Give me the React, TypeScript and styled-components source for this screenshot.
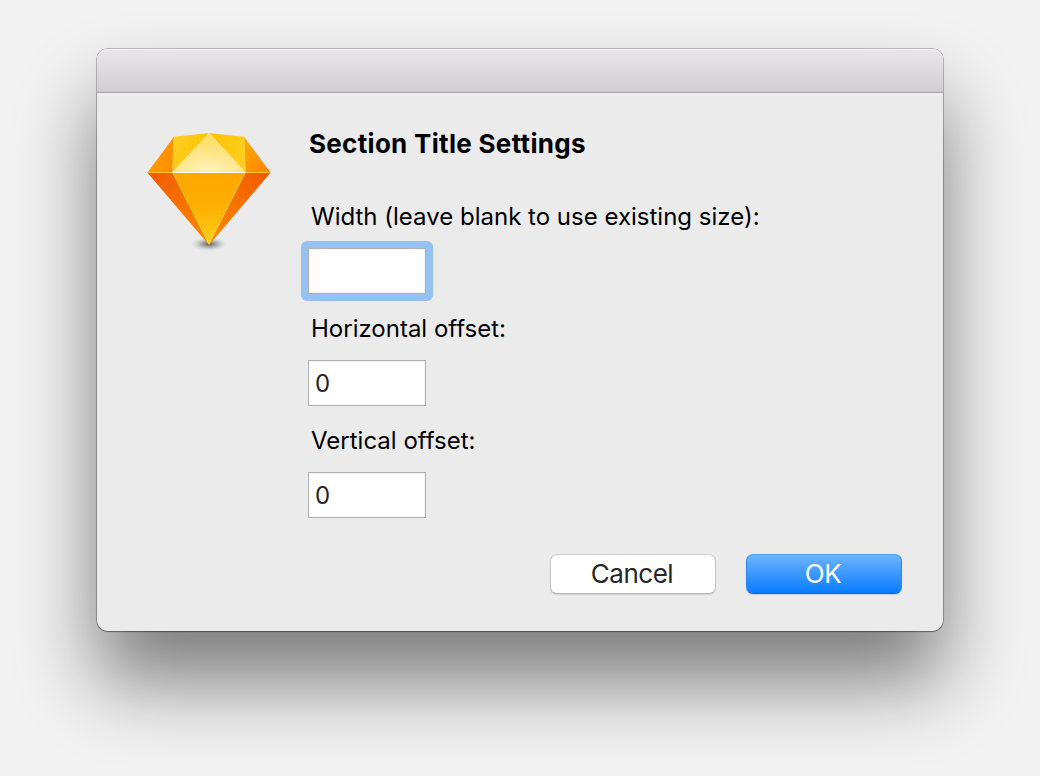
import React from "react";
import styled, { createGlobalStyle } from "styled-components";

const GlobalStyle = createGlobalStyle`
  *, *::before, *::after { box-sizing: border-box; }
  body {
    margin: 0;
    background: #f2f2f2;
    font-family: Inter, "Liberation Sans", sans-serif;
  }
`;

const Desktop = styled.main`
  height: 776px;
  padding: 49px 97px 0;
  overflow: hidden;
`;

const Dialog = styled.section`
  display: flex;
  flex-direction: column;
  height: 582px;
  border-radius: 11px;
  background: #ebebeb;
  box-shadow:
    0 0 0 1px rgba(0, 0, 0, 0.22),
    0 1px 1px rgba(0, 0, 0, 0.25),
    0 50px 80px rgba(0, 0, 0, 0.49);
`;

const TitleBar = styled.header`
  height: 44px;
  flex: none;
  border-radius: 11px 11px 0 0;
  border-bottom: 1px solid #aeacae;
  background: linear-gradient(#e8e6e9, #d0ced0);
  box-shadow: inset 0 1px 0 #f5f4f5, inset 0 -1px 0 #c4c2c4;
`;

const Content = styled.div`
  display: flex;
  padding: 35px 41px 0 50px;
`;

const AppIcon = styled.svg`
  flex: none;
  width: 124px;
  height: 124px;
  margin: 4px 37px 0 0;
`;

const Form = styled.form`
  flex: 1;
`;

const Heading = styled.h1`
  margin: 0 0 41px 1px;
  font-size: 26px;
  line-height: 32px;
  font-weight: 700;
  letter-spacing: 0.3px;
  color: #000;
`;

const Field = styled.div`
  height: 112px;
`;

const Label = styled.label`
  display: block;
  margin: 0 0 15px 3px;
  font-size: 24px;
  line-height: 32px;
  color: #000;
`;

const TextInput = styled.input`
  display: block;
  width: 118px;
  height: 46px;
  padding: 0 6px;
  border: 1px solid #b2b2b2;
  border-radius: 0;
  outline: none;
  background: #fff;
  box-shadow: inset 0 0 0 1px #f3f3f3;
  font: 24px/44px Inter, "Liberation Sans", sans-serif;
  color: #262626;
`;

const FocusRing = styled.div`
  width: 132px;
  margin: -7px;
  padding: 7px;
  border-radius: 6px;
  background: #95c1f3;
`;

const Actions = styled.footer`
  display: flex;
  justify-content: flex-end;
  gap: 30px;
  margin-top: 17px;
`;

const Button = styled.button<{ $primary?: boolean }>`
  width: ${({ $primary }) => ($primary ? "156px" : "166px")};
  height: 40px;
  padding: 0 2px 0 0;
  border: 1px solid;
  border-color: ${({ $primary }) =>
    $primary ? "#4ea0f5 #2f86f0 #0a62f0" : "#cfcfcf #c6c6c6 #b4b4b4"};
  border-radius: 7px;
  background: ${({ $primary }) =>
    $primary ? "linear-gradient(#6fb5fb, #067aff) border-box" : "#fff"};
  box-shadow: 0 1px 1px rgba(0, 0, 0, 0.12);
  font: 26px/38px Inter, "Liberation Sans", sans-serif;
  letter-spacing: -0.5px;
  color: ${({ $primary }) => ($primary ? "#fff" : "#262626")};
`;

function DiamondIcon() {
  return (
    <AppIcon viewBox="147 132 124 124" aria-hidden="true">
      <defs>
        <radialGradient id="ground">
          <stop offset="0" stopColor="#000" stopOpacity="0.6" />
          <stop offset="0.4" stopColor="#000" stopOpacity="0.28" />
          <stop offset="0.75" stopColor="#000" stopOpacity="0.07" />
          <stop offset="1" stopColor="#000" stopOpacity="0" />
        </radialGradient>
        <linearGradient id="front" x1="0" y1="0" x2="0" y2="1">
          <stop offset="0" stopColor="#ffa800" />
          <stop offset="0.45" stopColor="#fdae00" />
          <stop offset="1" stopColor="#ffd21a" />
        </linearGradient>
        <linearGradient id="lowerLeft" gradientUnits="userSpaceOnUse" x1="150" y1="172" x2="205" y2="240">
          <stop offset="0" stopColor="#f25a00" />
          <stop offset="0.5" stopColor="#f57200" />
          <stop offset="1" stopColor="#ff8500" />
        </linearGradient>
        <linearGradient id="lowerRight" gradientUnits="userSpaceOnUse" x1="265" y1="172" x2="213" y2="240">
          <stop offset="0" stopColor="#f25a00" />
          <stop offset="0.5" stopColor="#f57200" />
          <stop offset="1" stopColor="#ff8500" />
        </linearGradient>
        <linearGradient id="sideLeft" x1="0.2" y1="0.6" x2="1" y2="0.9">
          <stop offset="0" stopColor="#ff9b00" />
          <stop offset="1" stopColor="#fb8c00" />
        </linearGradient>
        <linearGradient id="sideRight" x1="0" y1="0.2" x2="0.8" y2="1">
          <stop offset="0" stopColor="#ffa600" />
          <stop offset="1" stopColor="#fc8700" />
        </linearGradient>
        <linearGradient id="crownLeft" x1="0" y1="0" x2="1" y2="0.3">
          <stop offset="0" stopColor="#fdce24" />
          <stop offset="1" stopColor="#ffc400" />
        </linearGradient>
        <linearGradient id="crownRight" x1="1" y1="0.4" x2="0" y2="0">
          <stop offset="0" stopColor="#fdce1c" />
          <stop offset="1" stopColor="#ffc200" />
        </linearGradient>
        <radialGradient id="table" cx="0.5" cy="1" r="0.95">
          <stop offset="0" stopColor="#fff1bd" />
          <stop offset="1" stopColor="#fedc5c" />
        </radialGradient>
      </defs>
      <ellipse cx="209" cy="244" rx="18" ry="7" fill="url(#ground)" />
      <path d="M147.3 172.5H173.5L209 245Z" fill="url(#lowerLeft)" />
      <path d="M270.7 172.5H244.5L209 245Z" fill="url(#lowerRight)" />
      <path d="M172.7 172.5H245.3L209 245Z" fill="url(#front)" />
      <path d="M147.3 172.7 174 136.7 172.7 172.7Z" fill="url(#sideLeft)" />
      <path d="M270.7 172.7 244 136.7 245.3 172.7Z" fill="url(#sideRight)" />
      <path d="M174 136.7 209 133 172.7 172.5Z" fill="url(#crownLeft)" />
      <path d="M244 136.7 209 133 245.3 172.5Z" fill="url(#crownRight)" />
      <path d="M209 133 245.3 172.5H172.7Z" fill="url(#table)" />
      <path
        d="M174 136.7 172.7 172.5 209 244 245.3 172.5 244 136.7M148.5 172.5H172.7M245.3 172.5H269.5"
        fill="none"
        stroke="#ffcf2e"
        strokeWidth="0.9"
      />
      <path d="M172.7 172 209 133.3 245.3 172" fill="none" stroke="#ffe888" strokeWidth="0.6" />
      <path d="M172.7 172.5H245.3" stroke="#fffdf0" strokeWidth="1.2" />
    </AppIcon>
  );
}

export default function App() {
  return (
    <>
      <GlobalStyle />
      <Desktop>
        <Dialog role="dialog" aria-labelledby="dialog-title">
          <TitleBar />
          <Content>
            <DiamondIcon />
            <Form onSubmit={(event) => event.preventDefault()}>
              <Heading id="dialog-title">Section Title Settings</Heading>
              <Field>
                <Label htmlFor="width">Width (leave blank to use existing size):</Label>
                <FocusRing>
                  <TextInput id="width" defaultValue="" />
                </FocusRing>
              </Field>
              <Field>
                <Label htmlFor="horizontal">Horizontal offset:</Label>
                <TextInput id="horizontal" defaultValue="0" />
              </Field>
              <Field>
                <Label htmlFor="vertical">Vertical offset:</Label>
                <TextInput id="vertical" defaultValue="0" />
              </Field>
              <Actions>
                <Button type="button">Cancel</Button>
                <Button type="submit" $primary>OK</Button>
              </Actions>
            </Form>
          </Content>
        </Dialog>
      </Desktop>
    </>
  );
}
